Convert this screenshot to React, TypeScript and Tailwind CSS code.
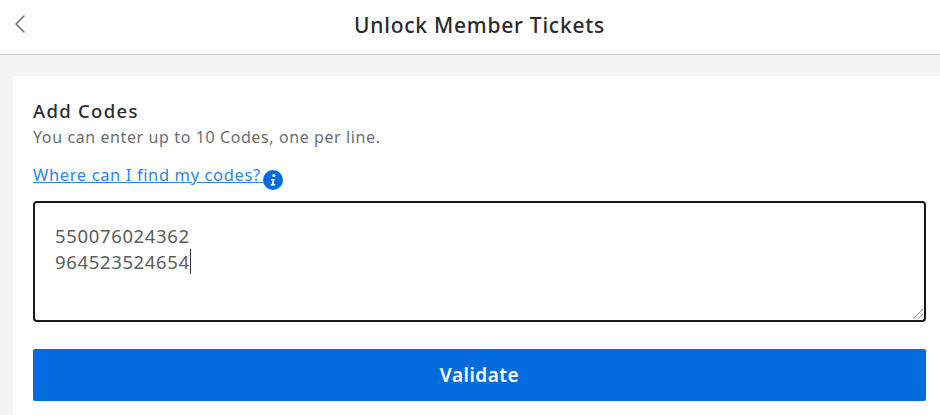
import { ChevronLeft } from 'lucide-react';

export default function App() {
  return (
    <div className="w-[940px] h-[415px] overflow-hidden bg-[#f4f4f4] font-['Noto_Sans','Lato',sans-serif]">
      {/* top bar */}
      <header className="relative flex h-[55px] items-center justify-center border-b border-[#c9c9c9] bg-white">
        <button className="absolute left-[4px] top-[8px] text-[#6b6b6b]" aria-label="Back">
          <ChevronLeft size={32} strokeWidth={1.1} />
        </button>
        <h1 className="-mt-[3px] ml-[19px] text-[21px] font-medium tracking-[0.75px] text-[#2b2b2b]">Unlock Member Tickets</h1>
      </header>

      <main className="ml-[13px] mt-[21px] h-[340px] bg-white pl-[20px] pr-[14px] pt-[24px]">
        <h2 className="text-[18.5px] leading-[22px] font-medium tracking-[1.3px] text-[#2b2b2b]">Add Codes</h2>
        <p className="mt-[5px] text-[16px] leading-[20px] tracking-[0.6px] text-[#6e6e6e]">
          You can enter up to 10 Codes, one per line.
        </p>

        <div className="mt-[18px] flex items-start">
          <a href="#" className="text-[16.5px] leading-[20px] tracking-[0.62px] whitespace-pre text-[#2c86ee] underline">
            {'Where can I find my codes? '}
          </a>
          <svg viewBox="0 0 20 20" className="-ml-[3px] mt-[5px] h-[20px] w-[20px]">
            <circle cx="10" cy="10" r="10" fill="#026cdf" />
            <circle cx="10.8" cy="5.6" r="1.5" fill="#fff" />
            <path d="M8.2 9h3.4l-.8 5h1.6l-.3 1.6H7.6l.3-1.6h1l.6-3.4H8z" fill="#fff" />
          </svg>
        </div>

        <div className="relative mt-[11px] h-[121px] rounded-[4px] border-2 border-[#1a1a1a] bg-white px-[20px] pt-[20px] text-[18.5px] leading-[26px] tracking-[0.65px] text-[#5c5c5c]">
          <div>550076024362</div>
          <div>
            <span className="border-r border-[#333]">964523524654</span>
          </div>
          <svg viewBox="0 0 12 12" className="absolute bottom-0 right-0 h-[12px] w-[12px]">
            <path d="M1 11 11 1M6 11l5-5" stroke="#9a9a9a" strokeWidth="1" fill="none" />
          </svg>
        </div>

        <button className="mt-[27px] flex h-[52px] w-full items-center justify-center rounded-[2px] bg-[#026cdf] text-[19px] font-semibold tracking-[0.5px] text-white">
          Validate
        </button>
      </main>
    </div>
  );
}
